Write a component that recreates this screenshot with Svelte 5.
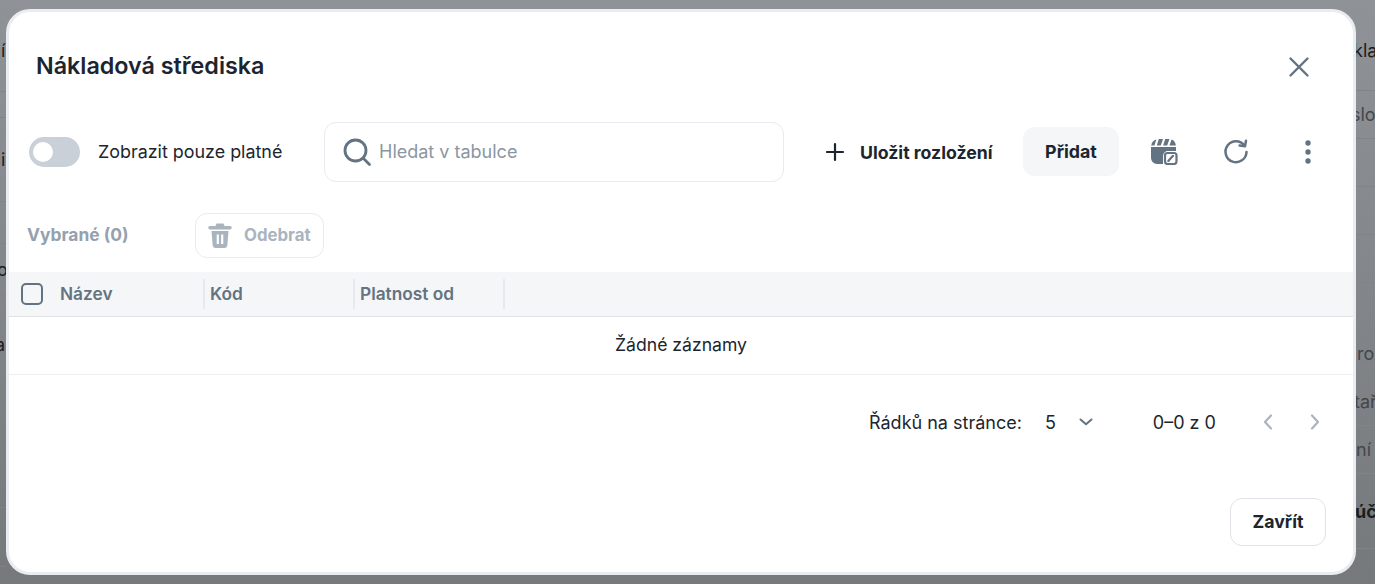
<script>
  let onlyValid = false;
  let search = "";
  const columns = [
    { label: "Název", width: 162 },
    { label: "Kód", width: 150 },
    { label: "Platnost od", width: 150 }
  ];
  // what shows of the page beside the dialog
  const leftRows = [
    { text: "í", height: 82, indent: 1 },
    { text: "", height: 26, indent: 0 },
    { text: "i", height: 84, indent: 1 },
    { text: "", height: 42, indent: 0 },
    { text: "o", height: 52, indent: -3 },
    { text: "a", height: 98, indent: -5 },
    { text: "", height: 114, indent: 0 },
    { text: "", height: 59, indent: 0 }
  ];
  const rightRows = [
    { text: "kla", height: 81, indent: -3 },
    { text: "slo", height: 48, indent: -5, muted: true },
    { text: "", height: 48, indent: 0 },
    { text: "", height: 48, indent: 0 },
    { text: "", height: 48, indent: 0 },
    { text: "", height: 47, indent: 0 },
    { text: "roz", height: 48, indent: 1, muted: true },
    { text: "tař", height: 48, indent: -2, muted: true },
    { text: "ní", height: 48, indent: 0, muted: true },
    { text: "úč", height: 75, indent: -1, strong: true }
  ];
</script>

<div class="page">
  <div class="behind left">
    {#each leftRows as row}
      <div class="behind-row" style="height: {row.height}px; line-height: {row.height}px; text-indent: {row.indent}px">{row.text}</div>
    {/each}
  </div>
  <div class="behind right">
    {#each rightRows as row}
      <div class="behind-row" class:muted={row.muted} class:strong={row.strong} style="height: {row.height}px; line-height: {row.height}px; text-indent: {row.indent}px">{row.text}</div>
    {/each}
  </div>

  <div class="modal">
    <header class="modal-head">
      <h2>Nákladová střediska</h2>
      <button class="icon-btn close" aria-label="Zavřít">
        <svg width="24" height="24" viewBox="0 0 24 24" fill="none" stroke="#637381" stroke-width="2.400" stroke-linecap="round"><path d="M3.500 3.500 20.500 20.500M20.500 3.500 3.500 20.500"/></svg>
      </button>
    </header>

    <div class="toolbar">
      <button class="switch" class:on={onlyValid} onclick={() => (onlyValid = !onlyValid)} aria-label="Zobrazit pouze platné">
        <span class="knob"></span>
      </button>
      <span class="switch-label">Zobrazit pouze platné</span>

      <label class="search">
        <svg width="30" height="30" viewBox="0 0 30 30" fill="none" stroke="#637381" stroke-width="2.800" stroke-linecap="round"><circle cx="13.500" cy="13.500" r="10.500"/><path d="M21.500 21.500 27.500 27.500"/></svg>
        <input type="text" placeholder="Hledat v tabulce" bind:value={search} />
      </label>

      <button class="save">
        <svg width="20" height="20" viewBox="0 0 20 20" fill="none" stroke="#1c252e" stroke-width="2.200" stroke-linecap="round"><path d="M10 2v16M2 10h16"/></svg>
        Uložit rozložení
      </button>
      <button class="add">Přidat</button>

      <button class="icon-btn layout" aria-label="Rozložení">
        <svg width="28" height="26" viewBox="0 0 28 26">
          <path fill="#637381" d="M1 8h25v4h-8a5 5 0 0 0-5 5v8H7a6 6 0 0 1-6-6z"/>
          <path fill="#637381" d="M1.200 6.500C1.700 3.400 3.600 1.400 6.400 .6L4.400 6.500zM8.800 0h4.200L10.800 6.500H6.800zM15.200 0h4.200L17.200 6.500h-4.100zM21.600 .4C24 1.200 25.600 3.400 25.900 6.500H19.400z"/>
          <rect x="15" y="14" width="11.500" height="11" rx="2.500" fill="#fff" stroke="#637381" stroke-width="2.200"/>
          <path d="M18.300 22 23 16.800" stroke="#637381" stroke-width="2.200" stroke-linecap="round"/>
        </svg>
      </button>
      <button class="icon-btn refresh" aria-label="Obnovit">
        <svg width="26" height="26" viewBox="0 0 26 26" fill="none" stroke="#637381" stroke-width="2.500" stroke-linecap="round" stroke-linejoin="round"><path d="M21.500 6.500A10.500 10.500 0 1 0 23.500 13"/><path d="M23 1.800 22 7.200 16.600 6.400" /></svg>
      </button>
      <button class="icon-btn dots" aria-label="Více">
        <svg width="8" height="26" viewBox="0 0 8 26" fill="#637381"><circle cx="4" cy="4" r="2.700"/><circle cx="4" cy="13" r="2.700"/><circle cx="4" cy="22" r="2.700"/></svg>
      </button>
    </div>

    <div class="selection">
      <span class="selected">Vybrané (0)</span>
      <button class="remove" disabled>
        <svg width="24" height="26" viewBox="0 0 24 26" fill="#a9b4bf"><path d="M8.500 .5h7l1 2.500H22a1.500 1.500 0 0 1 0 3.500H2A1.500 1.500 0 0 1 2 3h5.500z"/><path fill-rule="evenodd" d="M3.500 8h17l-1.200 14.500a3 3 0 0 1-3 2.500H7.700a3 3 0 0 1-3-2.500zM8.700 11.500v9.500h2.200v-9.500zM13.100 11.500v9.500h2.200v-9.500z"/></svg>
        <span class="remove-label">Odebrat</span>
      </button>
    </div>

    <div class="table">
      <div class="thead">
        <span class="check"></span>
        {#each columns as col, i}
          <span class="th" class:first={i === 0} style="width: {col.width}px">{col.label}</span>
        {/each}
      </div>
      <div class="empty">Žádné záznamy</div>
    </div>

    <div class="pager">
      <span>Řádků na stránce:</span>
      <span class="size">5</span>
      <svg class="size-chevron" width="14" height="8" viewBox="0 0 14 8" fill="none" stroke="#637381" stroke-width="2" stroke-linecap="round" stroke-linejoin="round"><path d="M1.500 1.500 7 6.300l5.500-4.800"/></svg>
      <span class="range">0–0 z 0</span>
      <svg class="prev" width="10" height="16" viewBox="0 0 10 16" fill="none" stroke="#a9b4bf" stroke-width="2.200" stroke-linecap="round" stroke-linejoin="round"><path d="M8 1.500 2 8l6 6.500"/></svg>
      <svg class="next" width="10" height="16" viewBox="0 0 10 16" fill="none" stroke="#a9b4bf" stroke-width="2.200" stroke-linecap="round" stroke-linejoin="round"><path d="M2 1.500 8 8l-6 6.500"/></svg>
    </div>

    <footer class="modal-foot">
      <button class="closing">Zavřít</button>
    </footer>
  </div>
</div>

<style>
  :global(body) {
    margin: 0;
    overflow: hidden;
  }

  .page {
    position: relative;
    width: 1375px;
    height: 584px;
    overflow: hidden;
    background: linear-gradient(to bottom, #8f9297, #76797c);
    font-family: Inter, "Noto Sans", sans-serif;
    color: #1c252e;
  }

  .behind {
    position: absolute;
    top: 10px;
    display: flex;
    flex-direction: column;
    font-size: 18px;
    color: #1a1e23;
  }

  .behind.left {
    left: 0;
    width: 6px;
    overflow: hidden;
  }

  .behind.right {
    left: 1356px;
    width: 19px;
    white-space: nowrap;
    overflow: hidden;
  }

  .behind-row {
    box-sizing: border-box;
    border-bottom: 1px solid #808388;
  }

  .behind-row.muted {
    color: #43474c;
  }

  .behind-row.strong {
    font-weight: 700;
  }

  .modal {
    position: absolute;
    left: 6px;
    top: 9px;
    width: 1350px;
    height: 566px;
    box-sizing: border-box;
    display: flex;
    flex-direction: column;
    background: #fff;
    border: 3px solid #e9edf1;
    border-radius: 24px;
  }

  button {
    font-family: inherit;
    border: none;
    background: none;
    padding: 0;
    color: inherit;
  }

  .icon-btn {
    display: flex;
    align-items: center;
    justify-content: center;
  }

  .modal-head {
    display: flex;
    align-items: center;
    justify-content: space-between;
    height: 54px;
    padding: 0 42px 0 27px;
    margin-top: 27px;
  }

  .close {
    margin-top: 1px;
  }

  h2 {
    margin: 0;
    font-size: 23.300px;
    line-height: 54px;
    font-weight: 580;
  }

  .toolbar {
    display: flex;
    align-items: center;
    height: 60px;
    margin-top: 29px;
    padding-left: 20px;
  }

  .switch {
    position: relative;
    width: 51px;
    height: 30px;
    border-radius: 15px;
    background: #c9d0d8;
  }

  .knob {
    position: absolute;
    left: 4px;
    top: 5px;
    width: 20px;
    height: 20px;
    border-radius: 50%;
    background: #fff;
  }

  .switch.on .knob {
    left: 27px;
  }

  .switch-label {
    margin-left: 18px;
    margin-bottom: 2px;
    width: 226px;
    font-size: 17.900px;
    color: #1c252e;
    white-space: nowrap;
  }

  .search {
    display: flex;
    align-items: center;
    gap: 6px;
    width: 460px;
    height: 60px;
    box-sizing: border-box;
    padding-left: 17px;
    border: 1px solid #e7ebef;
    border-radius: 12px;
  }

  .search input {
    flex: 1;
    margin-bottom: 2px;
    margin-left: -1px;
    border: none;
    outline: none;
    background: none;
    font-family: inherit;
    font-size: 18px;
    color: #1c252e;
  }

  .search input::placeholder {
    color: #8a96a3;
    opacity: 1;
  }

  .save {
    display: flex;
    align-items: center;
    gap: 15px;
    width: 168px;
    margin-left: 41px;
    font-size: 17.700px;
    font-weight: 700;
    white-space: nowrap;
  }

  .add {
    width: 96px;
    height: 49px;
    margin-left: 30px;
    margin-bottom: 1px;
    border-radius: 12px;
    background: #f4f6f8;
    font-size: 17.800px;
    font-weight: 700;
  }

  .layout {
    margin-left: 31px;
  }

  .refresh {
    margin-left: 45px;
  }

  .dots {
    margin-left: 55px;
  }

  .selection {
    display: flex;
    align-items: center;
    height: 45px;
    margin-top: 31px;
    padding-left: 18px;
  }

  .selected {
    width: 168px;
    margin-bottom: 2px;
    font-size: 17.400px;
    font-weight: 700;
    color: #95a1ae;
  }

  .remove {
    display: flex;
    align-items: center;
    gap: 11px;
    width: 129px;
    height: 45px;
    box-sizing: border-box;
    padding-left: 12px;
    border: 1px solid #e7ebef;
    border-radius: 12px;
    font-size: 16.800px;
    font-weight: 700;
    color: #a9b4bf;
  }

  .remove-label {
    margin-bottom: 2px;
    margin-left: 1px;
  }

  .table {
    margin-top: 14px;
  }

  .thead {
    display: flex;
    align-items: center;
    height: 44px;
    padding-left: 12px;
    background: #f4f6f8;
    border-bottom: 1px solid #dfe3e8;
  }

  .check {
    width: 18px;
    height: 18px;
    flex: none;
    border: 2px solid #637381;
    border-radius: 5px;
  }

  .th {
    box-sizing: border-box;
    height: 30px;
    line-height: 29px;
    padding-left: 5px;
    border-right: 2px solid #e6e9ed;
    font-size: 17.300px;
    font-weight: 600;
    color: #637381;
    white-space: nowrap;
  }

  .th.first {
    padding-left: 17px;
  }

  .empty {
    height: 57px;
    line-height: 56px;
    text-align: center;
    font-size: 17.600px;
    border-bottom: 1px solid #eceff2;
  }

  .pager {
    display: flex;
    align-items: center;
    height: 24px;
    margin-top: 35px;
    padding-left: 860px;
    font-size: 18px;
    white-space: nowrap;
  }

  .size {
    margin-left: 23px;
  }

  .size-chevron {
    margin-left: 23px;
  }

  .range {
    margin-left: 60px;
  }

  .prev {
    margin-left: 47px;
  }

  .next {
    margin-left: 37px;
  }

  .modal-foot {
    display: flex;
    justify-content: flex-end;
    margin-top: 64px;
    padding-right: 27px;
  }

  .closing {
    width: 96px;
    height: 48px;
    padding-bottom: 2px;
    border: 1px solid #dfe3e8;
    border-radius: 12px;
    background: #fff;
    font-size: 17.700px;
    font-weight: 700;
  }
</style>
